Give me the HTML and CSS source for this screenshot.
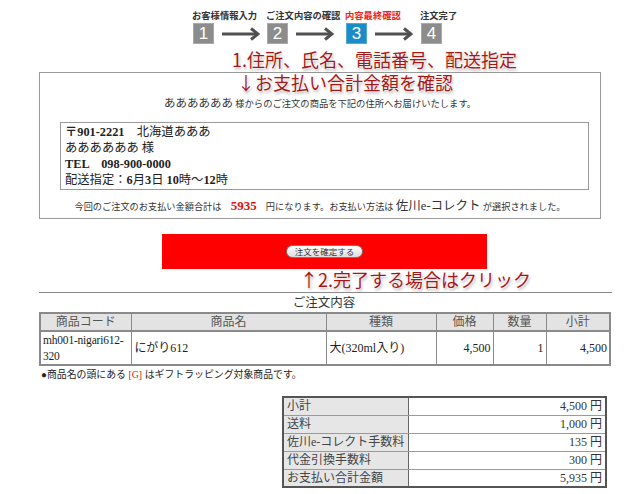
FILE: index.html
```html
<!DOCTYPE html>
<html lang="ja">
<head>
<meta charset="utf-8">
<title>注文内容の最終確認</title>
<link rel="stylesheet" href="styles.css">
</head>
<body>
<div class="page">
  <div class="steps">
    <div class="step">
      <div class="step-label">お客様情報入力</div>
      <div class="step-row">
        <span class="num">1</span>
        <svg class="arrow" width="38" height="14" viewBox="0 0 38 14"><line x1="0" y1="7" x2="35" y2="7"/><polyline points="29,1.5 36,7 29,12.5"/></svg>
      </div>
    </div>
    <div class="step">
      <div class="step-label">ご注文内容の確認</div>
      <div class="step-row">
        <span class="num">2</span>
        <svg class="arrow" width="38" height="14" viewBox="0 0 38 14"><line x1="0" y1="7" x2="35" y2="7"/><polyline points="29,1.5 36,7 29,12.5"/></svg>
      </div>
    </div>
    <div class="step">
      <div class="step-label current">内容最終確認</div>
      <div class="step-row">
        <span class="num current">3</span>
        <svg class="arrow" width="38" height="14" viewBox="0 0 38 14"><line x1="0" y1="7" x2="35" y2="7"/><polyline points="29,1.5 36,7 29,12.5"/></svg>
      </div>
    </div>
    <div class="step">
      <div class="step-label">注文完了</div>
      <div class="step-row">
        <span class="num">4</span>
      </div>
    </div>
  </div>

  <div class="callout callout-1">1.住所、氏名、電話番号、配送指定</div>

  <div class="confirm-box">
    <div class="callout callout-2">↓お支払い合計金額を確認</div>
    <p class="lead"><span class="lead-name">ああああああ</span> 様からのご注文の商品を下記の住所へお届けいたします。</p>
    <div class="address">
      <div><b>〒901-2221</b>　北海道あああ</div>
      <div>ああああああ 様</div>
      <div><b>TEL　098-900-0000</b></div>
      <div>配送指定：<b>6</b>月<b>3</b>日 <b>10</b>時～<b>12</b>時</div>
    </div>
    <p class="total">今回のご注文のお支払い金額合計は　<span class="total-amount">5935</span>　円になります。お支払い方法は <span class="pay-method">佐川e-コレクト</span> が選択されました。</p>
  </div>

  <div class="submit-area">
    <button class="submit-btn" type="button">注文を確定する</button>
  </div>
  <div class="callout callout-3">↑2.完了する場合はクリック</div>

  <hr class="divider">
  <h2 class="section-title">ご注文内容</h2>

  <table class="order">
    <colgroup>
      <col class="c-code"><col class="c-name"><col class="c-type"><col class="c-price"><col class="c-qty"><col class="c-sub">
    </colgroup>
    <thead>
      <tr><th>商品コード</th><th>商品名</th><th>種類</th><th>価格</th><th>数量</th><th>小計</th></tr>
    </thead>
    <tbody>
      <tr>
        <td class="code-cell">mh001-nigari612-<br>320</td>
        <td>にがり612</td>
        <td>大(320ml入り)</td>
        <td class="num-cell">4,500</td>
        <td class="num-cell">1</td>
        <td class="num-cell">4,500</td>
      </tr>
    </tbody>
  </table>
  <p class="gift-note">●商品名の頭にある <span class="gift-mark">[G]</span> はギフトラッピング対象商品です。</p>

  <table class="summary">
    <tr><th>小計</th><td>4,500 円</td></tr>
    <tr><th>送料</th><td>1,000 円</td></tr>
    <tr><th>佐川e-コレクト手数料</th><td>135 円</td></tr>
    <tr><th>代金引換手数料</th><td>300 円</td></tr>
    <tr><th>お支払い合計金額</th><td>5,935 円</td></tr>
  </table>
</div>
</body>
</html>
```

FILE: styles.css
```css
* { box-sizing: border-box; }

html, body {
  margin: 0;
  padding: 0;
  background: #ffffff;
}

body {
  font-family: "Liberation Serif", "Noto Sans CJK JP", serif;
  color: #222;
}

.page {
  width: 638px;
  padding-left: 39px;
}

/* ---------- steps ---------- */
.steps {
  display: grid;
  grid-template-columns: 74px 79px 75px auto;
  margin-left: 153px;
  padding-top: 9px;
}

.step-label {
  font-family: "Noto Sans CJK JP", "Noto Sans", sans-serif;
  font-size: 9.3px;
  font-weight: 700;
  line-height: 12px;
  color: #333;
  white-space: nowrap;
}

.step-label.current { color: #e8261f; }

.step-row {
  display: flex;
  align-items: center;
  gap: 8px;
  margin-top: 2px;
  margin-left: 1px;
}

.num {
  width: 21px;
  height: 21px;
  display: flex;
  align-items: center;
  justify-content: center;
  background: #8c8c8c;
  color: #fff;
  font-family: "Liberation Sans", Arial, sans-serif;
  font-size: 17px;
  line-height: 1;
  box-shadow: inset 0 0 0 1px rgba(255,255,255,0.25);
}

.num.current { background: #1b8cc6; }

.arrow line, .arrow polyline {
  stroke: #505050;
  stroke-width: 3;
  fill: none;
}

/* ---------- callouts ---------- */
.callout {
  font-family: "Noto Sans CJK JP", "Noto Sans", sans-serif;
  font-size: 18px;
  line-height: 20px;
  height: 20px;
  color: #a51818;
  white-space: nowrap;
  text-shadow: 0 0 2px #fff, 0 0 2px #fff, 1px 2px 3px rgba(0,0,0,0.35);
}

.callout-1 {
  margin: 5px 0 3px 193px;
}

.callout-2 {
  margin: -1px 0 0 177px;
}

.callout-3 {
  margin: 0 0 0 261px;
}

/* ---------- confirm box ---------- */
.confirm-box {
  width: 562px;
  border: 1px solid #9a9a9a;
  padding: 0 11px 3px 20px;
}

.lead {
  margin: 4px 0 0 -20px;
  width: 560px;
  text-align: center;
  font-size: 9.3px;
  line-height: 14px;
  color: #333;
}

.lead-name {
  font-size: 11.5px;
}

.address {
  margin-top: 11px;
  border: 1px solid #9a9a9a;
  padding: 1px 4px;
  font-size: 12.3px;
  line-height: 16px;
  color: #222;
}

.total {
  margin: 8px 0 0 -20px;
  width: 560px;
  text-align: center;
  font-size: 9.2px;
  line-height: 16px;
  color: #333;
}

.total-amount {
  color: #e01010;
  font-weight: 700;
  font-size: 13px;
}

.pay-method {
  font-size: 12.5px;
}

/* ---------- submit ---------- */
.submit-area {
  margin: 15px 0 0 123px;
  width: 325px;
  height: 35px;
  background: #ff0000;
  display: flex;
  align-items: center;
  justify-content: center;
}

.submit-btn {
  width: 77px;
  height: 13px;
  padding: 0;
  border: 1px solid #7a7a7a;
  border-radius: 7px;
  background: linear-gradient(#ffffff, #dcdcdc);
  font-family: "Noto Sans CJK JP", "Noto Sans", sans-serif;
  font-size: 8.5px;
  line-height: 11px;
  color: #333;
}

/* ---------- order table ---------- */
.divider {
  margin: 3px 0 0 0;
  width: 573px;
  border: 0;
  border-top: 1px solid #8a8a8a;
  height: 0;
}

.section-title {
  margin: 2px 0 0 0;
  width: 570px;
  text-align: center;
  font-size: 12.5px;
  font-weight: 400;
  line-height: 17px;
  color: #333;
}

.order {
  width: 570px;
  border-collapse: collapse;
  border: 2px solid #8a8a8a;
  font-size: 12px;
  table-layout: fixed;
}

.c-code { width: 91px; }
.c-name { width: 195px; }
.c-type { width: 110px; }
.c-price { width: 57px; }
.c-qty { width: 53px; }
.c-sub { width: 64px; }

.order th {
  background: #e3e3e3;
  color: #555;
  font-weight: 400;
  height: 18px;
  padding: 0;
  border: 1px solid #8a8a8a;
  border-bottom: 2px solid #8a8a8a;
  line-height: 16px;
}

.order td {
  border: 1px solid #8a8a8a;
  padding: 0 3px;
  line-height: 16px;
  height: 33px;
  color: #222;
  text-align: left;
}

.order td.code-cell {
  padding: 0 2px;
  font-size: 11.5px;
  letter-spacing: -0.2px;
  white-space: nowrap;
}

.order td.num-cell { text-align: right; padding-right: 2px; }

.gift-note {
  margin: 2px 0 0 2px;
  font-size: 9.9px;
  line-height: 14px;
  color: #222;
}

.gift-mark { color: #e02020; }

/* ---------- summary ---------- */
.summary {
  margin: 14px 0 0 243px;
  width: 325px;
  border-collapse: collapse;
  border: 2px solid #555;
  font-size: 12px;
}

.summary th {
  width: 125px;
  background: #e6e6e6;
  color: #444;
  font-weight: 400;
  text-align: left;
  padding: 0 3px;
  height: 18px;
  line-height: 16px;
  border: 1px solid #9a9a9a;
  border-right: 1px solid #666;
  white-space: nowrap;
}

.summary td {
  text-align: right;
  padding: 0 3px;
  height: 18px;
  line-height: 16px;
  border: 1px solid #9a9a9a;
  color: #333;
}
```
